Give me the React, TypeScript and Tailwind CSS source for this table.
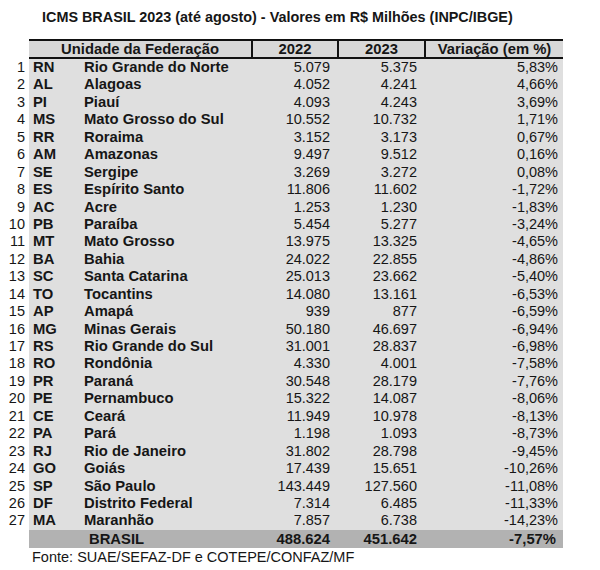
import React from "react";

const rows: [string, string, string, string, string][] = [
  ["RN", "Rio Grande do Norte", "5.079", "5.375", "5,83%"],
  ["AL", "Alagoas", "4.052", "4.241", "4,66%"],
  ["PI", "Piauí", "4.093", "4.243", "3,69%"],
  ["MS", "Mato Grosso do Sul", "10.552", "10.732", "1,71%"],
  ["RR", "Roraima", "3.152", "3.173", "0,67%"],
  ["AM", "Amazonas", "9.497", "9.512", "0,16%"],
  ["SE", "Sergipe", "3.269", "3.272", "0,08%"],
  ["ES", "Espírito Santo", "11.806", "11.602", "-1,72%"],
  ["AC", "Acre", "1.253", "1.230", "-1,83%"],
  ["PB", "Paraíba", "5.454", "5.277", "-3,24%"],
  ["MT", "Mato Grosso", "13.975", "13.325", "-4,65%"],
  ["BA", "Bahia", "24.022", "22.855", "-4,86%"],
  ["SC", "Santa Catarina", "25.013", "23.662", "-5,40%"],
  ["TO", "Tocantins", "14.080", "13.161", "-6,53%"],
  ["AP", "Amapá", "939", "877", "-6,59%"],
  ["MG", "Minas Gerais", "50.180", "46.697", "-6,94%"],
  ["RS", "Rio Grande do Sul", "31.001", "28.837", "-6,98%"],
  ["RO", "Rondônia", "4.330", "4.001", "-7,58%"],
  ["PR", "Paraná", "30.548", "28.179", "-7,76%"],
  ["PE", "Pernambuco", "15.322", "14.087", "-8,06%"],
  ["CE", "Ceará", "11.949", "10.978", "-8,13%"],
  ["PA", "Pará", "1.198", "1.093", "-8,73%"],
  ["RJ", "Rio de Janeiro", "31.802", "28.798", "-9,45%"],
  ["GO", "Goiás", "17.439", "15.651", "-10,26%"],
  ["SP", "São Paulo", "143.449", "127.560", "-11,08%"],
  ["DF", "Distrito Federal", "7.314", "6.485", "-11,33%"],
  ["MA", "Maranhão", "7.857", "6.738", "-14,23%"],
];

export default function App() {
  return (
    <div
      className="w-[600px] h-[570px] bg-white text-[#161616] overflow-hidden"
      style={{ fontFamily: '"Liberation Sans", Arial, sans-serif' }}
    >
      <div className="pt-[8px] pl-[42px] h-[39px] text-[14.4px] leading-[18px] font-bold whitespace-nowrap">
        ICMS BRASIL 2023 (até agosto) - Valores em R$ Milhões (INPC/IBGE)
      </div>

      {/* header */}
      <div className="flex">
        <div className="w-[29px]" />
        <div className="flex w-[534px] h-[20px] bg-[#d8d8d8] border-t-2 border-b-2 border-[#111] text-[14.8px] leading-[16px] font-bold">
          <div className="w-[224px] text-center border-r-2 border-[#111]">Unidade da Federação</div>
          <div className="w-[86px] text-center border-r-2 border-[#111]">2022</div>
          <div className="w-[87px] text-center border-r-2 border-[#111]">2023</div>
          <div className="flex-1 text-center">Variação (em %)</div>
        </div>
      </div>

      {/* body */}
      <div className="flex flex-col">
        {rows.map((r, i) => (
          <div key={r[0]} className="flex h-[17.45px] text-[14.5px] leading-[17.45px] whitespace-nowrap">
            <div className="w-[29px] pr-[4px] text-right">{i + 1}</div>
            <div className="flex w-[534px] bg-[#dfdfdf]">
              <div className="w-[55px] pl-[4px] font-bold text-[14.8px]">{r[0]}</div>
              <div className="w-[169px] font-bold text-[14.8px]">{r[1]}</div>
              <div className="w-[86px] pr-[9px] text-right">{r[2]}</div>
              <div className="w-[87px] pr-[9px] text-right">{r[3]}</div>
              <div className="flex-1 pr-[5px] text-right">{r[4]}</div>
            </div>
          </div>
        ))}
        <div className="flex h-[18px] text-[14.8px] leading-[18px] font-bold whitespace-nowrap">
          <div className="w-[29px]" />
          <div className="flex w-[534px] bg-[#b2b2b2]">
            <div className="w-[224px] pl-[60px]">BRASIL</div>
            <div className="w-[86px] pr-[9px] text-right">488.624</div>
            <div className="w-[87px] pr-[9px] text-right">451.642</div>
            <div className="flex-1 pr-[7px] text-right">-7,57%</div>
          </div>
        </div>
      </div>

      <div className="pl-[32px] text-[14.5px] leading-[18px] whitespace-nowrap">
        Fonte: SUAE/SEFAZ-DF e COTEPE/CONFAZ/MF
      </div>
    </div>
  );
}
